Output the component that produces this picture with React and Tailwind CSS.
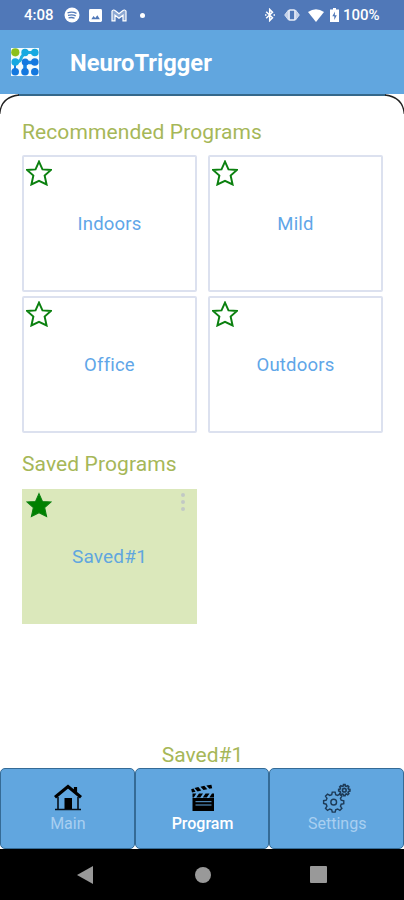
import React from 'react';

const STAR = 'M12 1.5 L15.2 8.7 L23 9.2 L17.2 14.3 L19 22.6 L12 19.2 L5 22.6 L6.8 14.3 L1 9.2 L8.8 8.7 Z';

const Star = ({ filled }) => (
  <svg viewBox="0 0 24 24" className="w-[26px] h-[26px]">
    <path d={STAR} fill={filled ? '#008000' : 'none'} stroke="#0b800f" strokeWidth={filled ? 1 : 1.8} strokeLinejoin="miter" />
  </svg>
);

const ProgramCard = ({ name }) => (
  <button className="relative flex h-[137px] items-center justify-center rounded-xs border-2 border-[#dce1ef] bg-white pt-[2px] text-[18.5px] tracking-[0.2px] text-[#60a6e8]">
    <span className="absolute left-[2px] top-[3px]"><Star /></span>
    {name}
  </button>
);

const StatusBar = () => (
  <div className="flex h-[30px] items-center bg-[#5078b8] pl-6 pr-[25px] text-[15px] font-medium text-white">
    <span className="w-[40px] pt-px">4:08</span>
    {/* Notification icons */}
    <svg viewBox="0 0 16 16" className="size-4">
      <circle cx="8" cy="8" r="7.5" fill="#fff" />
      <path d="M3.5 5.8q5-1.5 9 .6M4 8.4q4.4-1.2 7.7.5M4.6 10.8q3.6-.8 6 .5" fill="none" stroke="#5078b8" strokeWidth="1.3" />
    </svg>
    <svg viewBox="0 0 14 14" className="ml-[9px] size-[13px]">
      <rect width="14" height="14" rx="1.5" fill="#fff" />
      <path d="M2.5 11l2.4-3.4 1.8 2.1L9 6.6l2.7 4.4z" fill="#5078b8" />
    </svg>
    <svg viewBox="0 0 16 13" className="ml-[9px] h-[13px] w-4">
      <path d="M1 2.2v9.7h3V6.2l4 3 4-3v5.7h3V2.2Q13.5.2 12 1.5L8 4.8 4 1.5Q2.5.2 1 2.2Z" fill="#8da8d3" stroke="#fff" strokeWidth="1.2" />
    </svg>
    <span className="ml-[13px] size-[5px] rounded-full bg-white" />
    {/* System icons */}
    <svg viewBox="0 0 10 14" className="ml-auto h-[14px] w-[10px]">
      <path d="M1.2 3.8l6.3 6L4.7 12.6V1.4l2.8 2.8-6.3 6" fill="none" stroke="#fff" strokeWidth="1.5" />
      <path d="M0 7h1.5M8.5 7H10" stroke="#fff" strokeWidth="1.3" />
    </svg>
    <svg viewBox="0 0 16 12" className="ml-[9px] h-3 w-4">
      <path d="M4.5 1L.7 6l3.8 5M11.5 1l3.8 5-3.8 5" fill="#c3d0e8" stroke="#d5dff0" strokeWidth="1" />
      <rect x="5" y="1" width="6" height="10" rx="1" fill="#5078b8" stroke="#e9eef8" strokeWidth="1.7" />
    </svg>
    <svg viewBox="0 0 16 13" className="ml-2 h-[13px] w-4">
      <path d="M0 3Q8-2.5 16 3L8 13Z" fill="#fff" />
    </svg>
    <svg viewBox="0 0 9 14" className="ml-[6px] h-[14px] w-[9px]">
      <path d="M3 0h3v1.5h3V14H0V1.5h3z" fill="#fff" />
      <path d="M5 3.5L2.3 8.3h2V12l2.5-4.8h-2z" fill="#5078b8" />
    </svg>
    <span className="ml-[4px] w-[36px] pt-px">100%</span>
  </div>
);

// Dot matrix logo, green in the corner and blue elsewhere
const Logo = () => (
  <svg viewBox="0 0 28 28" className="size-7">
    <rect width="28" height="28" fill="#f4fbfc" />
    <path d="M4 14.5Q10 14 10.5 9L14 4.5H24" fill="none" stroke="#20aee0" strokeWidth="3" />
    <path d="M14 24V14.5H24" fill="none" stroke="#1684e2" strokeWidth="3.5" />
    <path d="M4 14.5V24M24 24V20" fill="none" stroke="#1684e2" strokeWidth="2" />
    <circle cx="4.3" cy="4.3" r="4.1" fill="#8cc01b" />
    <g fill="#15a9e1">
      <circle cx="14" cy="4.5" r="3.7" />
      <circle cx="23.8" cy="4.5" r="3.8" />
      <circle cx="4.2" cy="14" r="3.8" />
    </g>
    <g fill="#1478df">
      <circle cx="14.2" cy="14" r="3.5" />
      <circle cx="23.8" cy="14" r="3.8" />
      <circle cx="4.2" cy="23.8" r="3.8" />
      <circle cx="14" cy="23.8" r="3.8" />
      <circle cx="23.8" cy="23.8" r="3.8" />
    </g>
  </svg>
);

const HomeIcon = () => (
  <svg viewBox="0 0 28 28" className="size-7">
    <path d="M4 13V25.5M24 13V25.5M1 25.5H27" fill="none" stroke="#07101a" strokeWidth="1.6" />
    <path d="M1 13.3L14 2.5l13 10.8M21.5 3v5.5" fill="none" stroke="#000" strokeWidth="3.2" />
    <path d="M10.5 25V14h7.5V25z" fill="#000" />
  </svg>
);

const ClapperIcon = () => (
  <svg viewBox="0 0 28 28" className="size-7">
    <path d="M3.5 14H25v13H3.5z" fill="#000" />
    {/* Striped clap sticks */}
    <path d="M3 8.500L6.500 7.800 4.500 4.500 2.200 5.200zM8.500 7.400l3.800-.8-3-3.500-3.800.9zM14.500 6.100l3.800-.8-3-3.500-3.800.9zM20.400 4.800l2.800-.6-.8-3.400-5.100.8z" fill="#000" />
    <path d="M3.5 9.5h3.800l-2.500 4H3.5zM10 9.5h4l-2.700 4h-4zM16.500 9.5h4l-2.700 4h-4zM23 9.500h2v4h-4.700z" fill="#000" />
    <path d="M6.5 17.7h16M6.5 21h16" stroke="#61a6df" strokeWidth="1" />
  </svg>
);

const GEAR = 'M8.500 1h3l.6 2.700 2 .8 2.400-1.500 2.100 2.200-1.500 2.300.8 2 2.700.6v3l-2.700.6-.8 2 1.500 2.300-2.100 2.200-2.400-1.500-2 .8-.6 2.500h-3l-.6-2.500-2-.8-2.400 1.500L1.400 18l1.500-2.300-.8-2L-.6 13v-3l2.700-.5.8-2-1.500-2.300L3.500 3l2.400 1.500 2-.8z';

const GearsIcon = () => (
  <svg viewBox="0 0 28 28" className="size-7 overflow-visible" fill="none" stroke="#1d3b58">
    <g transform="translate(1.2 7.2) scale(.95)" strokeWidth="1.5">
      <path d={GEAR} />
      <circle cx="10" cy="11.5" r="3" />
    </g>
    <g transform="translate(16 .1) scale(.53)" strokeWidth="3">
      <path d={GEAR} />
      <circle cx="10" cy="11.5" r="3.5" />
    </g>
  </svg>
);

const tabs = [
  { name: 'Main', icon: HomeIcon },
  { name: 'Program', icon: ClapperIcon, active: true },
  { name: 'Settings', icon: GearsIcon },
];

const App = () => {
  return (
    <div className="flex h-[900px] w-[404px] flex-col overflow-hidden bg-white font-[Roboto,sans-serif]">
      <StatusBar />
      <header className="flex h-16 items-center bg-[#61a6df] pl-[11px]">
        <Logo />
        <h1 className="ml-[31px] pt-[3px] text-[23.7px] font-bold text-white">NeuroTrigger</h1>
      </header>

      <main className="relative flex grow flex-col pl-[22px] pr-[21px]">
        {/* Rounded top edge of the sheet */}
        <svg viewBox="0 0 404 22" className="absolute left-0 top-0 h-[22px] w-[404px]" fill="none">
          <path d="M18 1H386" stroke="#35688b" strokeWidth="2" />
          <path d="M-.3 20Q1 3 19 1M404.3 20Q403 3 385 1" stroke="#222" strokeWidth="1.3" />
        </svg>
        <h2 className="mt-[23px] h-[38px] text-[21px] leading-[30px] tracking-[0.1px] text-[#a6b758]">Recommended Programs</h2>
        <div className="grid grid-cols-2 gap-x-[11px] gap-y-1">
          <ProgramCard name="Indoors" />
          <ProgramCard name="Mild" />
          <ProgramCard name="Office" />
          <ProgramCard name="Outdoors" />
        </div>

        <h2 className="mt-4 h-[40px] text-[21px] leading-[30px] tracking-[0.1px] text-[#a6b758]">Saved Programs</h2>
        <button className="relative flex h-[135px] w-[175px] items-center justify-center bg-[#dbe8bb] pt-[2px] text-[19px] tracking-[0.2px] text-[#60a6df]">
          <span className="absolute left-1 top-[3px]"><Star filled /></span>
          <span className="absolute right-3 top-[4px] flex flex-col gap-[3px]">
            <i className="size-1 rounded-full bg-[#c2c9c4]" />
            <i className="size-1 rounded-full bg-[#c2c9c4]" />
            <i className="size-1 rounded-full bg-[#c2c9c4]" />
          </span>
          Saved#1
        </button>

        <p className="mt-auto text-center text-[21px] leading-[26px] text-[#a6b758]">Saved#1</p>
      </main>

      {/* Bottom tabs */}
      <nav className="flex h-[81px] bg-white">
        {tabs.map(({ name, icon: Icon, active }) => (
          <button key={name} className={`flex flex-1 flex-col items-center rounded-[5px] border border-[#356b96] bg-[#61a6df] pl-px pt-[15px] text-base leading-5 ${active ? 'font-medium text-white' : 'text-[#a8cff1]'}`}>
            <Icon />
            <span className="mt-[2px]">{name}</span>
          </button>
        ))}
      </nav>

      {/* Android navigation */}
      <div className="flex h-[51px] items-center bg-black pl-[77px]">
        <svg viewBox="0 0 16 18" className="h-[18px] w-4"><path d="M16 0v18L0 9z" fill="#999" /></svg>
        <span className="ml-[102px] size-4 rounded-full bg-[#999]" />
        <span className="ml-[99px] size-[17px] rounded-[1px] bg-[#999]" />
      </div>
    </div>
  );
};

export default App;
